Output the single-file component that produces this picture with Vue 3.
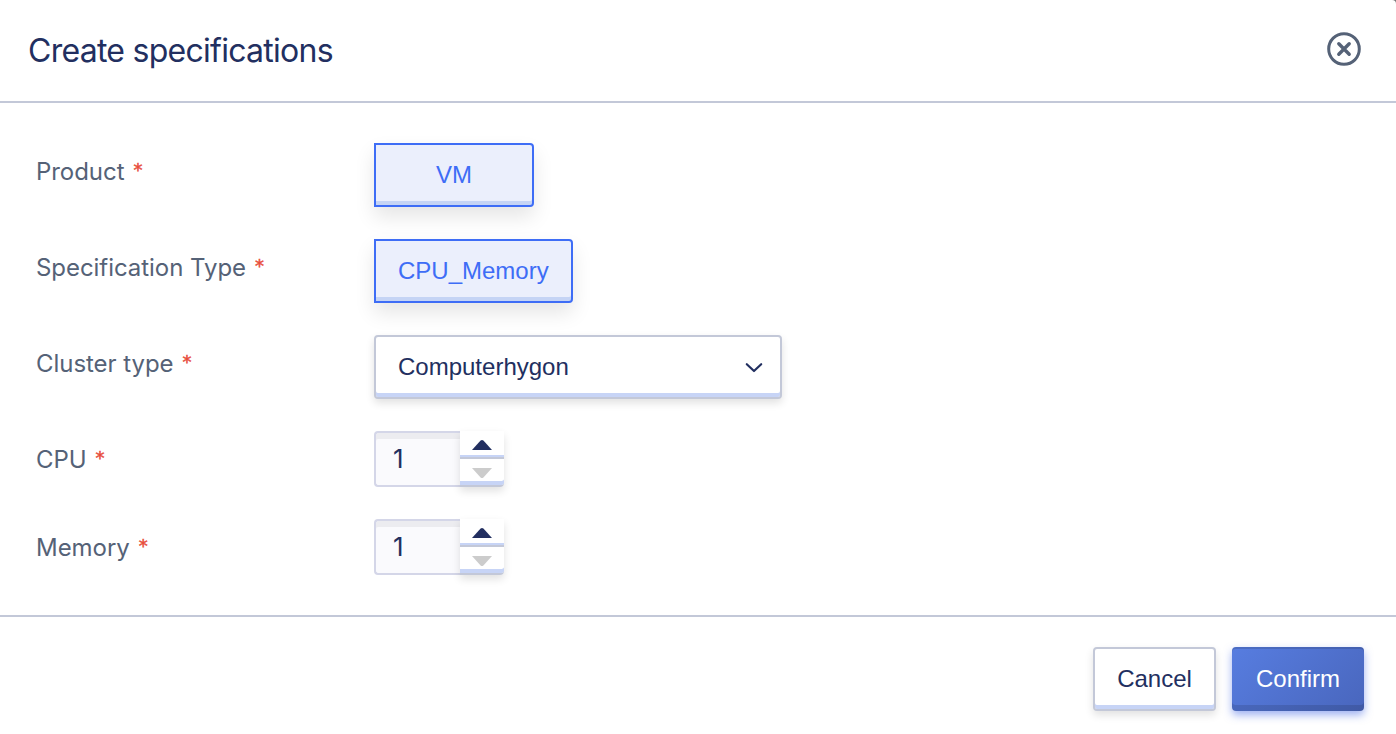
<script setup>
import { ref } from 'vue'

const choices = [
  { label: 'Product', value: 'VM' },
  { label: 'Specification Type', value: 'CPU_Memory' },
]
const amounts = ref([
  { label: 'CPU', value: 1 },
  { label: 'Memory', value: 1 },
])

function step(item, delta) {
  item.value = Math.max(1, item.value + delta)
}
</script>

<template>
  <section class="dialog">
    <header class="header">
      <h1 class="title">Create specifications</h1>
      <button class="close" aria-label="Close">
        <svg width="34" height="34" viewBox="0 0 34 34" fill="none" stroke="#556277">
          <circle cx="17" cy="17" r="15.3" stroke-width="3" />
          <path d="M11.8 11.8l10.4 10.4M22.2 11.8l-10.4 10.4" stroke-width="3.4" stroke-linecap="round" />
        </svg>
      </button>
    </header>

    <main class="form">
      <div v-for="c in choices" :key="c.label" class="row">
        <span class="label"><span>{{ c.label }}</span><span class="star">*</span></span>
        <button class="choice">{{ c.value }}</button>
      </div>
      <div class="row">
        <span class="label"><span>Cluster type</span><span class="star">*</span></span>
        <div class="select">
          <span>Computerhygon</span>
          <svg width="18" height="12" viewBox="0 0 18 12" fill="none">
            <path d="M1.8 3.2L9 10L16.2 3.2" stroke="#222f60" stroke-width="2.2" stroke-linecap="round" stroke-linejoin="round" />
          </svg>
        </div>
      </div>
      <div v-for="a in amounts" :key="a.label" class="row short">
        <span class="label"><span>{{ a.label }}</span><span class="star">*</span></span>
        <div class="number">
          <span class="value">{{ a.value }}</span>
          <div class="steps">
            <button class="step up" aria-label="Increase" @click="step(a, 1)">
              <svg width="20" height="10" viewBox="0 0 20 10"><path d="M0 10L8.6 0.6Q10 -0.6 11.4 0.6L20 10Z" fill="#222f60" /></svg>
            </button>
            <button class="step down" aria-label="Decrease" @click="step(a, -1)">
              <svg width="20" height="10" viewBox="0 0 20 10"><path d="M0 0L8.6 9.4Q10 10.6 11.4 9.4L20 0Z" fill="#ccc" /></svg>
            </button>
          </div>
        </div>
      </div>
    </main>

    <footer class="footer">
      <button class="btn cancel">Cancel</button>
      <button class="btn confirm">Confirm</button>
    </footer>
  </section>
</template>

<style>
body {
  margin: 0;
  background: #777;
}
</style>

<style scoped>
* {
  box-sizing: border-box;
}
button {
  font: inherit;
  margin: 0;
  padding: 0;
  border: 0;
  background: none;
}
.dialog {
  height: 734px;
  display: flex;
  flex-direction: column;
  overflow: hidden;
  border-top-right-radius: 4px;
  background: #fff;
  color: #222f60;
  font: 24px/28px 'Liberation Sans', Arial, sans-serif;
}
.header {
  height: 103px;
  padding: 0 35px 3px 28px;
  border-bottom: 2px solid #c3c8d8;
  display: flex;
  align-items: center;
  justify-content: space-between;
}
.title {
  margin: 0;
  padding-top: 3px;
  font: 400 32px/40px Inter, sans-serif;
  letter-spacing: -0.73px;
}
.close {
  width: 34px;
  height: 34px;
}
.close svg {
  display: block;
}
.form {
  height: 514px;
  padding: 40px 36px 0;
  border-bottom: 2px solid #c3c8d8;
  display: flex;
  flex-direction: column;
  gap: 32px;
}
.row {
  height: 64px;
  display: flex;
  align-items: flex-start;
}
.row.short {
  height: 56px;
}
.label {
  width: 338px;
  padding-top: 14px;
  display: flex;
  gap: 9px;
  color: #556277;
  font: 24px/30px Inter, sans-serif;
  letter-spacing: -0.05px;
}
.star {
  color: #e84e3c;
  font: 18px/26px 'DejaVu Sans', sans-serif;
  -webkit-text-stroke: 0.5px #e84e3c;
}
.choice {
  min-width: 160px;
  height: 64px;
  padding: 0 22px;
  border: 2px solid #3e6df6;
  border-radius: 0 4px 4px 0;
  background: #ebeffc;
  color: #3e6df6;
  box-shadow: inset 0 -4px 0 #c5d4f5, 0 10px 20px rgba(0, 0, 0, 0.1);
}
.select {
  width: 408px;
  height: 64px;
  padding: 0 17px 0 22px;
  display: flex;
  align-items: center;
  justify-content: space-between;
  border: 2px solid #c3c8d8;
  border-radius: 4px;
  background: #fff;
  box-shadow: inset 0 -4px 0 #c7d4f6, 0 4px 8px rgba(0, 0, 0, 0.12);
}
.number {
  width: 130px;
  height: 56px;
  display: flex;
}
.value {
  width: 86px;
  padding: 10px 0 0 17px;
  border: 2px solid #d4d6e8;
  border-right: 0;
  border-radius: 4px 0 0 4px;
  background: #fafafd;
  box-shadow: inset 0 6px 0 #ececf0;
  font: 26px/32px Inter, sans-serif;
}
.steps {
  width: 44px;
  border-radius: 0 4px 4px 0;
  box-shadow: 0 4px 8px rgba(0, 0, 0, 0.12);
}
.step {
  width: 44px;
  height: 28px;
  display: flex;
  justify-content: center;
  background: #fff;
}
.up {
  padding-top: 9px;
  border-bottom: 2px solid #c3c8d8;
  box-shadow: inset 0 -2px 0 #c7d4f6;
}
.down {
  padding-top: 9px;
  border-bottom: 2px solid #c3c8d8;
  border-radius: 0 0 4px 0;
  box-shadow: inset 0 -4px 0 #c7d4f6;
}
.footer {
  padding: 30px 32px 0;
  display: flex;
  justify-content: flex-end;
  gap: 16px;
}
.btn {
  height: 64px;
  border-radius: 4px;
}
.cancel {
  width: 123px;
  border: 2px solid #c3c8d8;
  background: #fff;
  color: #222f60;
  box-shadow: inset 0 -4px 0 #c7d4f6, 0 4px 8px rgba(0, 0, 0, 0.12);
}
.confirm {
  width: 132px;
  background: linear-gradient(135deg, #577de0, #4966bd);
  color: #fff;
  box-shadow: inset 0 2px 0 rgba(0, 0, 0, 0.12), inset 0 -6px 0 rgba(0, 0, 0, 0.12), 0 4px 8px rgba(62, 100, 230, 0.5);
}
</style>
